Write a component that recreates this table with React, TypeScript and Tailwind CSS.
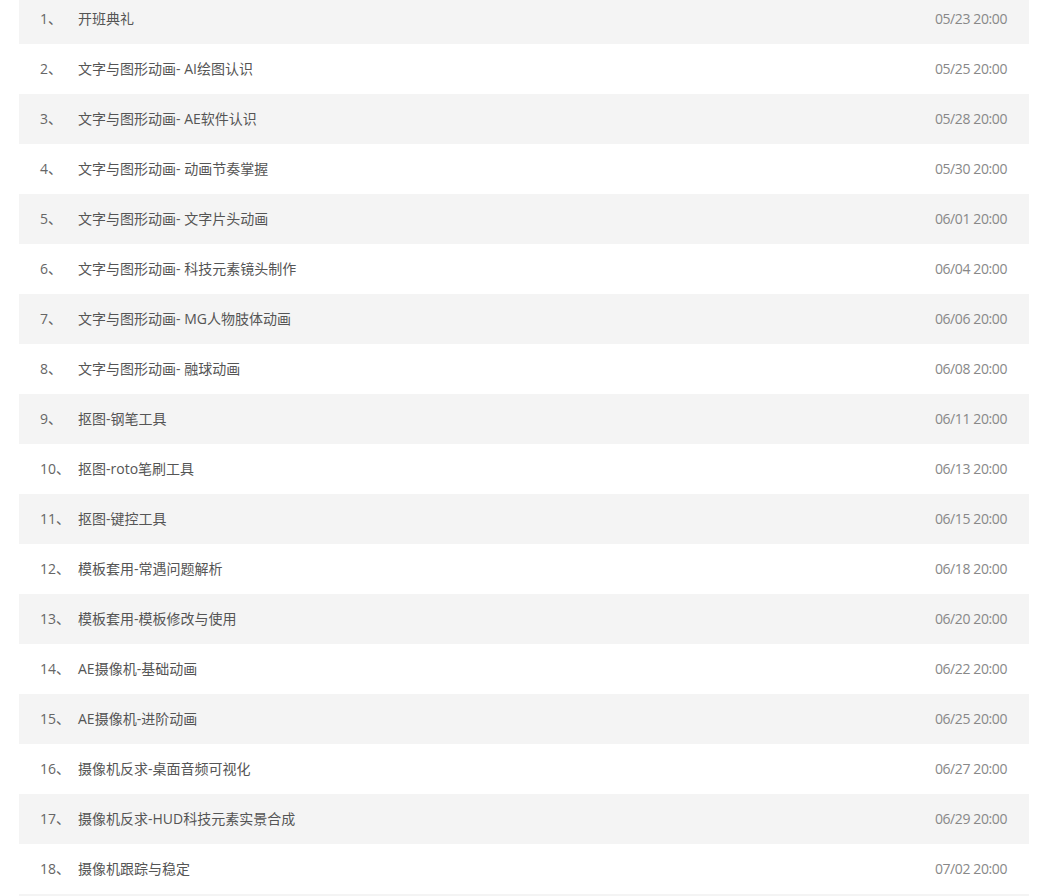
const lessons = [
  { title: '开班典礼', time: '05/23 20:00' },
  { title: '文字与图形动画- AI绘图认识', time: '05/25 20:00' },
  { title: '文字与图形动画- AE软件认识', time: '05/28 20:00' },
  { title: '文字与图形动画- 动画节奏掌握', time: '05/30 20:00' },
  { title: '文字与图形动画- 文字片头动画', time: '06/01 20:00' },
  { title: '文字与图形动画- 科技元素镜头制作', time: '06/04 20:00' },
  { title: '文字与图形动画- MG人物肢体动画', time: '06/06 20:00' },
  { title: '文字与图形动画- 融球动画', time: '06/08 20:00' },
  { title: '抠图-钢笔工具', time: '06/11 20:00' },
  { title: '抠图-roto笔刷工具', time: '06/13 20:00' },
  { title: '抠图-键控工具', time: '06/15 20:00' },
  { title: '模板套用-常遇问题解析', time: '06/18 20:00' },
  { title: '模板套用-模板修改与使用', time: '06/20 20:00' },
  { title: 'AE摄像机-基础动画', time: '06/22 20:00' },
  { title: 'AE摄像机-进阶动画', time: '06/25 20:00' },
  { title: '摄像机反求-桌面音频可视化', time: '06/27 20:00' },
  { title: '摄像机反求-HUD科技元素实景合成', time: '06/29 20:00' },
  { title: '摄像机跟踪与稳定', time: '07/02 20:00' },
];

export default function App() {
  return (
    <div className="h-[896px] bg-white overflow-hidden font-['Open_Sans','Noto_Sans_CJK_SC',sans-serif] text-[14px]">
      <ul className="mx-[19px] w-[1010px] -mt-[6px]">
        {lessons.map((l, i) => (
          <li
            key={i}
            className={`flex items-center h-[50px] pl-[21px] pr-[22px] pb-[2px] ${i % 2 === 0 ? 'bg-[#f4f4f4]' : 'bg-white'}`}
          >
            <span className="w-[38px] shrink-0 text-[#666]">{i + 1}、</span>
            <span className="flex-1 text-[#555]">{l.title}</span>
            <span className="text-[#888] tracking-[-0.4px]">{l.time}</span>
          </li>
        ))}
        {/* next row only peeks in at the bottom edge */}
        <li className="h-[50px] bg-[#f4f4f4]" />
      </ul>
    </div>
  );
}
